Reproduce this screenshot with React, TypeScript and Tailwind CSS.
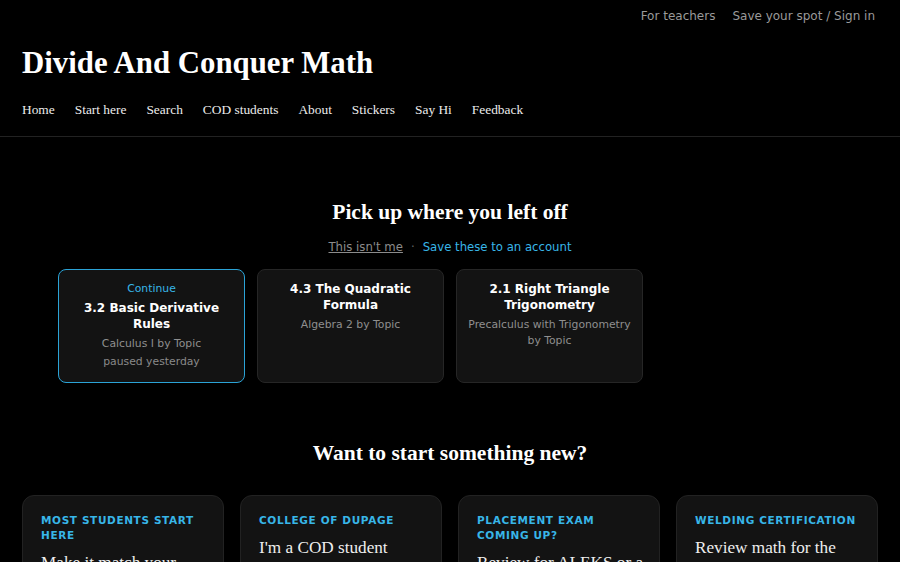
const serif = { fontFamily: '"Liberation Serif", "Times New Roman", serif' };

const navLinks = ['Home', 'Start here', 'Search', 'COD students', 'About', 'Stickers', 'Say Hi', 'Feedback'];

type Recent = { title: string; course: string; note?: string; current?: boolean };

const recent: Recent[] = [
  { title: '3.2 Basic Derivative Rules', course: 'Calculus I by Topic', note: 'paused yesterday', current: true },
  { title: '4.3 The Quadratic Formula', course: 'Algebra 2 by Topic' },
  { title: '2.1 Right Triangle Trigonometry', course: 'Precalculus with Trigonometry by Topic' },
];

const paths = [
  { label: 'Most students start here', text: 'Make it match your class' },
  { label: 'College of DuPage', text: "I'm a COD student" },
  { label: 'Placement exam coming up?', text: 'Review for ALEKS or a placement test' },
  { label: 'Welding certification', text: 'Review math for the welding test' },
];

function RecentCard({ item }: { item: Recent }) {
  return (
    <a
      href="#"
      className={`flex h-[114px] flex-col items-center rounded-lg border bg-[#131313] px-[10px] pt-[11px] text-center ${
        item.current ? 'border-[#2ba3d6]' : 'border-[#262626]'
      }`}
    >
      {item.current && <span className="mb-[3px] text-[10.8px] leading-[16px] text-[#38b6e8]">Continue</span>}
      <span className="text-[12px] font-bold leading-[16px] text-white">{item.title}</span>
      <span className="mt-[4px] text-[10.8px] leading-[16px] text-[#8f8f8f]">{item.course}</span>
      {item.note && <span className="text-[10.8px] leading-[20px] text-[#8a8a8a]">{item.note}</span>}
    </a>
  );
}

export default function App() {
  return (
    <div className="min-h-screen bg-black text-white" style={{ fontFamily: '"DejaVu Sans", sans-serif' }}>
      <header className="border-b border-[#222]">
        <div className="flex justify-end gap-[17px] px-[25px] pt-[6px] text-[12px] leading-[20px] text-[#9a9a9a]">
          <a href="#">For teachers</a>
          <a href="#">Save your spot / Sign in</a>
        </div>
        <div className="px-[22px]">
          <h1 className="mt-[19px] text-[30.8px] font-bold leading-[36px] text-white" style={serif}>
            Divide And Conquer Math
          </h1>
          <nav className="mt-[19px] flex gap-[20px] pb-[16px] text-[13.4px] leading-[20px] text-[#ececec]" style={serif}>
            {navLinks.map((l) => (
              <a key={l} href="#">
                {l}
              </a>
            ))}
          </nav>
        </div>
      </header>

      <main>
        <section className="pt-[61px]">
          <h2 className="text-center text-[21.5px] font-bold leading-[28px]" style={serif}>
            Pick up where you left off
          </h2>
          <div className="mt-[12px] flex justify-center gap-[8px] text-[11.7px] leading-[18px]">
            <a href="#" className="text-[#8c8c8c] underline">
              This isn't me
            </a>
            <span className="text-[#666]">·</span>
            <a href="#" className="text-[#38b6e8]">
              Save these to an account
            </a>
          </div>
          <div className="mx-auto mt-[13px] grid max-w-[784px] grid-cols-4 gap-[12px]">
            {recent.map((r) => (
              <RecentCard key={r.title} item={r} />
            ))}
          </div>
        </section>

        <section className="pt-[56px]">
          <h2 className="text-center text-[21.5px] font-bold leading-[28px]" style={serif}>
            Want to start something new?
          </h2>
          <div className="mt-[28px] grid grid-cols-4 gap-4 px-[22px]">
            {paths.map((p) => (
              <a
                key={p.label}
                href="#"
                className="rounded-xl border border-[#222] bg-[#131313] pt-[17px] pr-[12px] pb-5 pl-[18px]"
              >
                <div className="pr-[6px] text-[10.5px] font-bold uppercase leading-[15px] tracking-[0.06em] text-[#38b6e8]">
                  {p.label}
                </div>
                <div className="mt-[8px] text-[17.2px] leading-[24px] text-[#eee]" style={serif}>
                  {p.text}
                </div>
              </a>
            ))}
          </div>
        </section>
      </main>
    </div>
  );
}
